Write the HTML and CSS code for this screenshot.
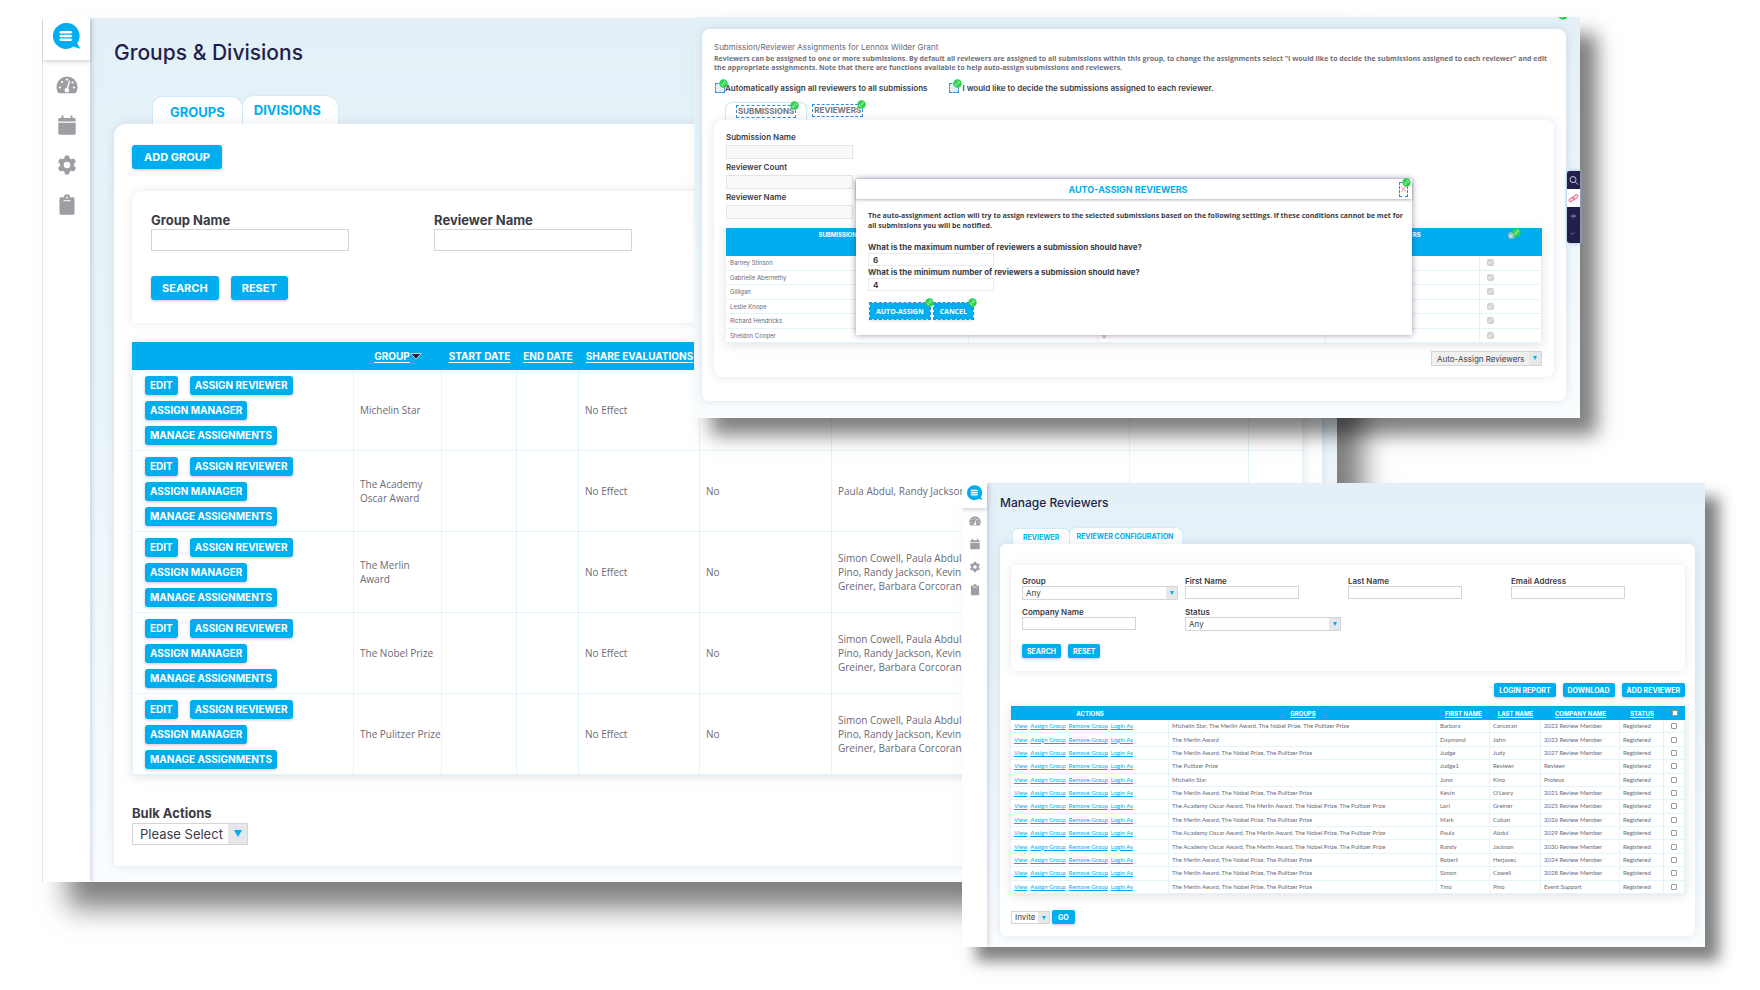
FILE: index.html
```html
<!DOCTYPE html>
<html lang="en">
<head>
<meta charset="utf-8">
<title>Groups &amp; Divisions</title>
<link rel="stylesheet" href="styles.css">
</head>
<body>
<svg class="sprite" aria-hidden="true">
  <symbol id="logo" viewBox="0 0 28 27">
    <path fill="#00aeef" d="M13 0a13 13 0 1 0 7.500 23.600c2.300 1 4.500 1.700 7.200 2.200-1.900-2-2.800-3.700-3.300-5.700A13 13 0 0 0 13 0z"/>
    <path fill="#fff" d="M7.500 8h10.500l1.500 1.300-1.500 1.200H7.500L6 9.300zM7.500 11.800h10.500l1.500 1.200-1.500 1.300H7.500L6 13zM7.500 15.500h10.500l1.500 1.300-1.500 1.200H7.500L6 16.800z"/>
  </symbol>
  <symbol id="gauge" viewBox="0 0 22 22">
    <path fill="#9d9da3" d="M11 2.500A10.500 10.500 0 0 0 .5 13c0 2 .5 3.800 1.400 5.400.3.500.7.800 1.200.8h15.800c.5 0 .9-.3 1.200-.8.900-1.600 1.400-3.400 1.400-5.400A10.500 10.500 0 0 0 11 2.500z"/>
    <g fill="#fff"><circle cx="11" cy="5.600" r="1.100"/><circle cx="6" cy="8" r="1.100"/><circle cx="4" cy="13.500" r="1.100"/><circle cx="18" cy="13.500" r="1.100"/><circle cx="16.500" cy="8.500" r="1.100"/><path d="M13 6.500l1.200.4-2 7.300a2.300 2.300 0 1 1-1.300-.4z"/></g>
  </symbol>
  <symbol id="calendar" viewBox="0 0 22 22">
    <path fill="#9d9da3" d="M5.500 1.500h2V4h7V1.500h2V4h1.700c.8 0 1.500.7 1.500 1.500v2H2.300v-2C2.300 4.700 3 4 3.800 4h1.700zM2.300 8.700h17.400v10.500c0 .8-.7 1.500-1.500 1.500H3.800c-.8 0-1.500-.7-1.500-1.500z"/>
  </symbol>
  <symbol id="cog" viewBox="0 0 22 22">
    <path fill="#9d9da3" fill-rule="evenodd" d="M9 1.500h4l.6 2.700 1.800 1 2.600-.8 2 3.500-2 1.900v2.300l2 1.900-2 3.500-2.600-.8-1.800 1-.6 2.800H9l-.6-2.800-1.800-1-2.600.8L2 14l2-1.900V9.800L2 7.900l2-3.500 2.600.8 1.800-1zM11 7.700a3.300 3.300 0 1 0 0 6.600 3.300 3.300 0 0 0 0-6.600z"/>
  </symbol>
  <symbol id="clipboard" viewBox="0 0 22 22">
    <path fill="#9d9da3" d="M5 3.200h3a3 3 0 0 1 6 0h3c.8 0 1.500.7 1.500 1.500v14.500c0 .8-.7 1.500-1.500 1.500H5c-.8 0-1.500-.7-1.500-1.500V4.700c0-.8.700-1.500 1.500-1.500z"/>
    <path fill="#fff" d="M7.500 6.200h7v1h-7z"/><circle cx="11" cy="3.500" r=".9" fill="#fff"/>
  </symbol>
  <symbol id="pin" viewBox="0 0 10 10">
    <circle cx="5" cy="5" r="4.700" fill="#2bd14b"/>
    <path fill="none" stroke="#d9f7dc" stroke-width=".8" d="M4.300 5.600l1.500-1.500M4.800 3.800l.7-.8a1 1 0 0 1 1.500 1.500l-.8.700M5.300 6.200l-.7.800a1 1 0 0 1-1.500-1.500l.7-.7"/>
  </symbol>
</svg>

<main class="desktop">
  <section class="window window-groups" aria-label="Groups and divisions">
    <nav class="rail" aria-label="Main">
      <a class="rail-logo" href="#" aria-label="Home"><svg><use href="#logo"/></svg></a>
      <a href="#" aria-label="Dashboard"><svg><use href="#gauge"/></svg></a>
      <a href="#" aria-label="Calendar"><svg><use href="#calendar"/></svg></a>
      <a href="#" aria-label="Settings"><svg><use href="#cog"/></svg></a>
      <a href="#" aria-label="Clipboard"><svg><use href="#clipboard"/></svg></a>
    </nav>
    <div class="content">
      <h1>Groups &amp; Divisions</h1>
      <div class="tabs"><a class="tab tab-on" href="#">GROUPS</a><a class="tab" href="#">DIVISIONS</a></div>
      <div class="panel">
        <button class="btn btn-add" type="button">ADD GROUP</button>
        <form class="card">
          <div class="fields">
            <label class="field">Group Name<input type="text"></label>
            <label class="field">Reviewer Name<input type="text"></label>
          </div>
          <div class="actions"><button class="btn" type="button">SEARCH</button><button class="btn" type="button">RESET</button></div>
        </form>
        <table class="grid">
          <colgroup><col class="g-act"><col class="g-group"><col class="g-start"><col class="g-end"><col class="g-share"><col class="g-no"><col class="g-rev"><col class="g-x"><col></colgroup>
          <thead><tr><th></th><th><a href="#">GROUP</a><svg class="sort" viewBox="0 0 12 7"><path fill="#231f4b" stroke="#d9c9cf" d="M.8.500h10.400L6 6.300z"/></svg></th><th><a href="#">START DATE</a></th><th><a href="#">END DATE</a></th><th><a href="#">SHARE EVALUATIONS</a></th><th></th><th></th><th></th><th></th></tr></thead>
          <tbody>
            <tr><td><div class="row-actions"><button class="chip" type="button">EDIT</button><button class="chip" type="button">ASSIGN REVIEWER</button><button class="chip" type="button">ASSIGN MANAGER</button><button class="chip" type="button">MANAGE ASSIGNMENTS</button></div></td><td>Michelin Star</td><td></td><td></td><td>No Effect</td><td></td><td></td><td></td><td></td></tr>
            <tr><td><div class="row-actions"><button class="chip" type="button">EDIT</button><button class="chip" type="button">ASSIGN REVIEWER</button><button class="chip" type="button">ASSIGN MANAGER</button><button class="chip" type="button">MANAGE ASSIGNMENTS</button></div></td><td>The Academy<br>Oscar Award</td><td></td><td></td><td>No Effect</td><td>No</td><td>Paula Abdul, Randy Jackson</td><td></td><td></td></tr>
            <tr><td><div class="row-actions"><button class="chip" type="button">EDIT</button><button class="chip" type="button">ASSIGN REVIEWER</button><button class="chip" type="button">ASSIGN MANAGER</button><button class="chip" type="button">MANAGE ASSIGNMENTS</button></div></td><td>The Merlin<br>Award</td><td></td><td></td><td>No Effect</td><td>No</td><td>Simon Cowell, Paula Abdul,<br>Pino, Randy Jackson, Kevin<br>Greiner, Barbara Corcoran,</td><td></td><td></td></tr>
            <tr><td><div class="row-actions"><button class="chip" type="button">EDIT</button><button class="chip" type="button">ASSIGN REVIEWER</button><button class="chip" type="button">ASSIGN MANAGER</button><button class="chip" type="button">MANAGE ASSIGNMENTS</button></div></td><td>The Nobel Prize</td><td></td><td></td><td>No Effect</td><td>No</td><td>Simon Cowell, Paula Abdul,<br>Pino, Randy Jackson, Kevin<br>Greiner, Barbara Corcoran</td><td></td><td></td></tr>
            <tr><td><div class="row-actions"><button class="chip" type="button">EDIT</button><button class="chip" type="button">ASSIGN REVIEWER</button><button class="chip" type="button">ASSIGN MANAGER</button><button class="chip" type="button">MANAGE ASSIGNMENTS</button></div></td><td>The Pulitzer Prize</td><td></td><td></td><td>No Effect</td><td>No</td><td>Simon Cowell, Paula Abdul,<br>Pino, Randy Jackson, Kevin<br>Greiner, Barbara Corcoran,</td><td></td><td></td></tr>
          </tbody>
        </table>
        <label class="field bulk">Bulk Actions<span class="select"><select><option>Please Select</option></select></span></label>
      </div>
    </div>
  </section>

  <section class="window window-assign" aria-label="Submission assignments">
    <div class="sheet">
      <h2>Submission/Reviewer Assignments for Lennox Wilder Grant</h2>
      <p class="note">Reviewers can be assigned to one or more submissions. By default all reviewers are assigned to all submissions within this group, to change the assignments select "I would like to decide the submissions assigned to each reviewer" and edit the appropriate assignments. Note that there are functions available to help auto-assign submissions and reviewers.</p>
      <div class="choices">
        <label class="choice"><span class="mark"><input type="radio" name="mode"><svg class="pin"><use href="#pin"/></svg></span>Automatically assign all reviewers to all submissions</label>
        <label class="choice choice-wide"><span class="mark"><input type="radio" name="mode"><svg class="pin"><use href="#pin"/></svg></span>I would like to decide the submissions assigned to each reviewer.</label>
      </div>
      <div class="tabs"><div class="tab tab-on"><a class="mark" href="#">SUBMISSIONS<svg class="pin"><use href="#pin"/></svg></a></div><div class="tab"><a class="mark" href="#">REVIEWERS<svg class="pin"><use href="#pin"/></svg></a></div></div>
      <div class="panel">
        <label class="field">Submission Name<input type="text" disabled></label>
        <label class="field">Reviewer Count<input type="text" disabled></label>
        <label class="field">Reviewer Name<input type="text" disabled></label>
        <table class="grid">
          <colgroup><col class="a-name"><col class="a-b"><col class="a-c"><col class="a-rev"><col class="a-chk"></colgroup>
          <thead><tr><th>SUBMISSION NAME</th><th></th><th></th><th>REVIEWERS</th><th><span class="head-check"><input type="checkbox" aria-label="Select all" checked disabled><svg class="pin"><use href="#pin"/></svg></span></th></tr></thead>
          <tbody>
            <tr><td>Barney Stinson</td><td></td><td></td><td></td><td><input type="checkbox" aria-label="Barney Stinson" checked disabled></td></tr>
            <tr><td>Gabrielle Abernethy</td><td></td><td></td><td></td><td><input type="checkbox" aria-label="Gabrielle Abernethy" checked disabled></td></tr>
            <tr><td>Gilligan</td><td></td><td></td><td></td><td><input type="checkbox" aria-label="Gilligan" checked disabled></td></tr>
            <tr><td>Leslie Knope</td><td></td><td></td><td></td><td><input type="checkbox" aria-label="Leslie Knope" checked disabled></td></tr>
            <tr><td>Richard Hendricks</td><td></td><td></td><td></td><td><input type="checkbox" aria-label="Richard Hendricks" checked disabled></td></tr>
            <tr><td>Sheldon Cooper</td><td></td><td>0</td><td></td><td><input type="checkbox" aria-label="Sheldon Cooper" checked disabled></td></tr>
          </tbody>
        </table>
        <div class="panel-foot"><span class="select select-grey"><select aria-label="Bulk action"><option>Auto-Assign Reviewers</option></select></span></div>
      </div>
    </div>
    <div class="corner-clip"><svg class="corner-pin"><use href="#pin"/></svg></div>
    <div class="tools">
      <button type="button" aria-label="Search"><svg viewBox="0 0 12 12"><circle cx="5.500" cy="5" r="3.300" fill="none" stroke="#dcd9e6"/><path stroke="#dcd9e6" d="M8 7.500l3 3"/></svg></button>
      <button class="tool-on" type="button" aria-label="Links"><svg viewBox="0 0 12 12"><g fill="none" stroke="#ee7d9b" stroke-width="1.400"><rect x="1" y="5.500" width="6" height="3" rx="1.500" transform="rotate(-40 4 7)"/><rect x="5" y="3" width="6" height="3" rx="1.500" transform="rotate(-40 8 4.500)"/></g></svg></button>
      <button type="button" aria-label="View"><svg viewBox="0 0 12 12"><path fill="none" stroke="#77739a" d="M3 5.500q3-3 6 0-3 3-6 0z"/><circle cx="6" cy="5.500" r="1" fill="#77739a"/></svg></button>
      <button type="button" aria-label="More"><svg viewBox="0 0 12 12"><path fill="none" stroke="#77739a" d="M3 4l1.500 2L7 3.500"/></svg></button>
    </div>
    <div class="modal" role="dialog" aria-label="Auto-assign reviewers">
      <header><h3>AUTO-ASSIGN REVIEWERS</h3><button class="mark close" type="button" aria-label="Close"><svg viewBox="0 0 8 10"><path stroke="#ee7d9b" d="M1.500 2l5 6M6.500 2l-5 6"/></svg><svg class="pin"><use href="#pin"/></svg></button></header>
      <div class="modal-body">
        <p>The auto-assignment action will try to assign reviewers to the selected submissions based on the following settings. If these conditions cannot be met for all submissions you will be notified.</p>
        <label class="field">What is the maximum number of reviewers a submission should have?<input type="text" value="6"></label>
        <label class="field">What is the minimum number of reviewers a submission should have?<input type="text" value="4"></label>
        <div class="actions"><button class="btn mark" type="button">AUTO-ASSIGN<svg class="pin"><use href="#pin"/></svg></button><button class="btn mark" type="button">CANCEL<svg class="pin"><use href="#pin"/></svg></button></div>
      </div>
    </div>
  </section>

  <section class="window window-reviewers" aria-label="Manage reviewers">
    <nav class="rail" aria-label="Reviewer area">
      <a class="rail-logo" href="#" aria-label="Home"><svg><use href="#logo"/></svg></a>
      <a href="#" aria-label="Dashboard"><svg><use href="#gauge"/></svg></a>
      <a href="#" aria-label="Calendar"><svg><use href="#calendar"/></svg></a>
      <a href="#" aria-label="Settings"><svg><use href="#cog"/></svg></a>
      <a href="#" aria-label="Clipboard"><svg><use href="#clipboard"/></svg></a>
    </nav>
    <div class="content">
      <h1>Manage Reviewers</h1>
      <div class="tabs"><a class="tab tab-on" href="#">REVIEWER</a><a class="tab" href="#">REVIEWER CONFIGURATION</a></div>
      <div class="panel">
        <form class="card">
          <div class="fields">
            <label class="field field-wide">Group<span class="select"><select><option>Any</option></select></span></label>
            <label class="field">First Name<input type="text"></label>
            <label class="field">Last Name<input type="text"></label>
            <label class="field">Email Address<input type="text"></label>
            <label class="field">Company Name<input type="text"></label>
            <label class="field field-wide">Status<span class="select"><select><option>Any</option></select></span></label>
          </div>
          <div class="actions"><button class="btn" type="button">SEARCH</button><button class="btn" type="button">RESET</button></div>
        </form>
        <div class="toolbar"><button class="btn" type="button">LOGIN REPORT</button><button class="btn" type="button">DOWNLOAD</button><button class="btn" type="button">ADD REVIEWER</button></div>
        <table class="grid">
          <colgroup><col class="r-act"><col><col class="r-first"><col class="r-last"><col class="r-comp"><col class="r-stat"><col class="r-chk"></colgroup>
          <thead><tr><th>ACTIONS</th><th><a href="#">GROUPS</a></th><th><a href="#">FIRST NAME</a></th><th><a href="#">LAST NAME</a></th><th><a href="#">COMPANY NAME</a></th><th><a href="#">STATUS</a></th><th><input type="checkbox" aria-label="Select all"></th></tr></thead>
          <tbody>
            <tr><td><a href="#">View</a><a href="#">Assign Group</a><a href="#">Remove Group</a><a href="#">Login As</a></td><td>Michelin Star, The Merlin Award, The Nobel Prize, The Pulitzer Prize</td><td>Barbara</td><td>Corcoran</td><td>2022 Review Member</td><td>Registered</td><td><input type="checkbox" aria-label="Barbara Corcoran"></td></tr>
            <tr><td><a href="#">View</a><a href="#">Assign Group</a><a href="#">Remove Group</a><a href="#">Login As</a></td><td>The Merlin Award</td><td>Daymond</td><td>John</td><td>2023 Review Member</td><td>Registered</td><td><input type="checkbox" aria-label="Daymond John"></td></tr>
            <tr><td><a href="#">View</a><a href="#">Assign Group</a><a href="#">Remove Group</a><a href="#">Login As</a></td><td>The Merlin Award, The Nobel Prize, The Pulitzer Prize</td><td>Judge</td><td>Judy</td><td>2027 Review Member</td><td>Registered</td><td><input type="checkbox" aria-label="Judge Judy"></td></tr>
            <tr><td><a href="#">View</a><a href="#">Assign Group</a><a href="#">Remove Group</a><a href="#">Login As</a></td><td>The Pulitzer Prize</td><td>Judge1</td><td>Reviewr</td><td>Reviewr</td><td>Registered</td><td><input type="checkbox" aria-label="Judge1 Reviewr"></td></tr>
            <tr><td><a href="#">View</a><a href="#">Assign Group</a><a href="#">Remove Group</a><a href="#">Login As</a></td><td>Michelin Star</td><td>Juno</td><td>Kino</td><td>Proteus</td><td>Registered</td><td><input type="checkbox" aria-label="Juno Kino"></td></tr>
            <tr><td><a href="#">View</a><a href="#">Assign Group</a><a href="#">Remove Group</a><a href="#">Login As</a></td><td>The Merlin Award, The Nobel Prize, The Pulitzer Prize</td><td>Kevin</td><td>O'Leary</td><td>2021 Review Member</td><td>Registered</td><td><input type="checkbox" aria-label="Kevin O'Leary"></td></tr>
            <tr><td><a href="#">View</a><a href="#">Assign Group</a><a href="#">Remove Group</a><a href="#">Login As</a></td><td>The Academy Oscar Award, The Merlin Award, The Nobel Prize, The Pulitzer Prize</td><td>Lori</td><td>Greiner</td><td>2025 Review Member</td><td>Registered</td><td><input type="checkbox" aria-label="Lori Greiner"></td></tr>
            <tr><td><a href="#">View</a><a href="#">Assign Group</a><a href="#">Remove Group</a><a href="#">Login As</a></td><td>The Merlin Award, The Nobel Prize, The Pulitzer Prize</td><td>Mark</td><td>Cuban</td><td>2026 Review Member</td><td>Registered</td><td><input type="checkbox" aria-label="Mark Cuban"></td></tr>
            <tr><td><a href="#">View</a><a href="#">Assign Group</a><a href="#">Remove Group</a><a href="#">Login As</a></td><td>The Academy Oscar Award, The Merlin Award, The Nobel Prize, The Pulitzer Prize</td><td>Paula</td><td>Abdul</td><td>2029 Review Member</td><td>Registered</td><td><input type="checkbox" aria-label="Paula Abdul"></td></tr>
            <tr><td><a href="#">View</a><a href="#">Assign Group</a><a href="#">Remove Group</a><a href="#">Login As</a></td><td>The Academy Oscar Award, The Merlin Award, The Nobel Prize, The Pulitzer Prize</td><td>Randy</td><td>Jackson</td><td>2030 Review Member</td><td>Registered</td><td><input type="checkbox" aria-label="Randy Jackson"></td></tr>
            <tr><td><a href="#">View</a><a href="#">Assign Group</a><a href="#">Remove Group</a><a href="#">Login As</a></td><td>The Merlin Award, The Nobel Prize, The Pulitzer Prize</td><td>Robert</td><td>Herjavec</td><td>2024 Review Member</td><td>Registered</td><td><input type="checkbox" aria-label="Robert Herjavec"></td></tr>
            <tr><td><a href="#">View</a><a href="#">Assign Group</a><a href="#">Remove Group</a><a href="#">Login As</a></td><td>The Merlin Award, The Nobel Prize, The Pulitzer Prize</td><td>Simon</td><td>Cowell</td><td>2028 Review Member</td><td>Registered</td><td><input type="checkbox" aria-label="Simon Cowell"></td></tr>
            <tr><td><a href="#">View</a><a href="#">Assign Group</a><a href="#">Remove Group</a><a href="#">Login As</a></td><td>The Merlin Award, The Nobel Prize, The Pulitzer Prize</td><td>Tino</td><td>Pino</td><td>Event Support</td><td>Registered</td><td><input type="checkbox" aria-label="Tino Pino"></td></tr>
          </tbody>
        </table>
        <div class="panel-foot"><span class="select"><select aria-label="Bulk action"><option>Invite</option></select></span><button class="btn" type="button">GO</button></div>
      </div>
    </div>
  </section>
</main>
</body>
</html>
```
FILE: styles.css
```css
* { box-sizing: border-box; }
body { margin: 0; background: #fff; color: #3c3c46; font-family: Inter, "Open Sans", sans-serif; }
h1, h2, h3, p { margin: 0; }
a { color: inherit; text-decoration: none; }
svg { display: block; }
button, input, select { font: inherit; margin: 0; }
.sprite { position: absolute; width: 0; height: 0; }
.desktop { position: relative; min-height: 100vh; overflow: hidden; }

/* Windows on the desktop */
.window { position: absolute; isolation: isolate; display: flex; background: linear-gradient(#e3f0f7, #e8f4f9 40%, #fafdfe); }
.window-groups { top: 18px; left: 42px; right: 423px; box-shadow: 26px 26px 26px rgba(0, 0, 0, .5); }
.window-assign { top: 17px; left: 694px; right: 180px; box-shadow: 17px 17px 18px rgba(0, 0, 0, .5); }
.window-reviewers { top: 483px; left: 962px; right: 55px; box-shadow: 14px 14px 14px rgba(0, 0, 0, .5); }

/* Icon rail */
.rail { display: flex; flex-direction: column; align-items: center; flex: none; background: #fff; box-shadow: 1px 0 6px rgba(60, 70, 120, .25); clip-path: inset(0 -8px 0 0); }
.rail-logo { display: flex; justify-content: center; width: 100%; box-shadow: 0 2px 4px rgba(60, 60, 80, .22); }
.content { flex: 1; min-width: 0; }
h1 { color: #231f4b; font-weight: 500; }

.tabs { display: flex; align-items: stretch; }
.tab { display: flex; align-items: center; background: #fff; color: #00aeef; font-weight: 700; box-shadow: 0 0 2px #b9deee; }
.tab-on { position: relative; z-index: 1; box-shadow: none; border: solid #cdeaf5; border-width: 1px 1px 0; }
.panel { position: relative; z-index: 1; background: #fff; box-shadow: 0 0 10px rgba(90, 100, 150, .16); }
.card { background: #fff; box-shadow: 0 0 10px rgba(90, 90, 120, .14); }
.fields, .actions, .toolbar, .panel-foot { display: flex; }

.field { display: block; font-weight: 700; white-space: nowrap; }
.field input { display: block; border: 1px solid #d5d5d8; background: #fff; border-radius: 0; outline: 0; }
.field input:disabled { background: #fafafa; border-color: #e4e4e6; }
.select { position: relative; display: block; font-weight: 400; }
.select select { display: block; width: 100%; height: 100%; padding: 0; border: 1px solid #d5d5d8; border-radius: 0; appearance: none; background: #fff; color: #3c3c46; outline: 0; }
.select::before { content: ""; position: absolute; top: 1px; bottom: 1px; right: 1px; background: #e6e7eb; pointer-events: none; }
.select::after { content: ""; position: absolute; border: solid transparent; border-top-color: #00aeef; border-bottom: 0; pointer-events: none; }
.select-grey select { background: #f0f0f0; }

.btn, .chip { display: block; padding: 0; border: 0; background: #00aeef; color: #fff; font-weight: 700; white-space: nowrap; box-shadow: 0 1px 3px rgba(60, 60, 90, .3); }

.grid { width: 100%; border-collapse: separate; border-spacing: 0; table-layout: fixed; background: #fff; box-shadow: 0 2px 10px rgba(90, 90, 120, .18); }
.grid th { padding: 0; background: #00aeef; color: #fff; font-weight: 700; white-space: nowrap; }
.grid th a { text-decoration: underline; text-underline-offset: 2px; }
.grid td { border: solid #e4f4fb; border-width: 0 1px 1px 0; color: #6a6a76; white-space: nowrap; }
.grid input { display: block; width: 7px; height: 7px; }

/* Groups window */
.window-groups .rail { width: 48px; border-left: 1px solid #dfe4ee; }
.window-groups .rail a { margin-bottom: 18px; }
.window-groups .rail .rail-logo { height: 42px; padding-top: 5px; margin-bottom: 14px; }
.window-groups .rail svg { width: 22px; height: 22px; }
.window-groups .rail .rail-logo svg { width: 28px; height: 27px; }
.window-groups .content { padding: 20px 15px 16px 24px; }
.window-groups h1 { font-size: 21px; line-height: 30px; }
.window-groups .tabs { height: 28px; margin-top: 28px; padding-left: 38px; font-size: 13px; }
.window-groups .tab { padding: 0 17px 0 11px; border-radius: 10px 12px 0 0; }
.window-groups .tab-on { padding: 2px 17px 0; }
.window-groups .panel { padding: 21px 19px 21px 18px; border-radius: 12px 12px 0 0; }
.window-groups .btn { height: 24px; padding: 0 11px; border-radius: 3px; font-size: 11px; }
.window-groups .btn-add { padding: 0 12px; }
.window-groups .card { margin-top: 22px; padding: 20px 19px 23px; border-radius: 12px 12px 0 0; }
.window-groups .fields { gap: 85px; }
.window-groups .field { font-size: 13px; line-height: 18px; }
.window-groups .field input { width: 198px; height: 22px; }
.window-groups .actions { gap: 12px; margin-top: 25px; }
.window-groups .grid { margin-top: 19px; font-size: 10px; }
.window-groups th { height: 28px; }
.window-groups td { height: 81px; padding: 0 0 0 6px; font-family: "Open Sans", sans-serif; line-height: 14px; }
.window-groups td:first-child { padding: 0 12px; border-left: 1px solid #e4f4fb; }
.sort { display: inline-block; width: 12px; height: 7px; }
.g-act { width: 222px; } .g-group { width: 88px; } .g-start { width: 75px; } .g-end { width: 62px; } .g-share { width: 121px; }
.g-no { width: 132px; } .g-rev { width: 298px; } .g-x { width: 119px; }
.row-actions { display: flex; flex-wrap: wrap; gap: 6px 12px; font-family: Inter, sans-serif; }
.chip { height: 19px; padding: 0 5px; border-radius: 3px; font-size: 10px; }
.window-groups .bulk { margin-top: 29px; }
.bulk .select { width: 116px; height: 22px; margin-top: 1px; font-size: 13px; }
.bulk .select select { padding-left: 7px; }
.bulk .select::before { width: 19px; }
.bulk .select::after { border-width: 7px 4px 0; right: 6px; top: 7px; }

/* Assignment window */
.window-assign { padding: 12px 14px 17px 8px; font-size: 8px; }
.sheet { flex: 1; min-width: 0; padding: 11px 12px 24px; border-radius: 8px; background: #fff; box-shadow: 0 0 8px rgba(90, 100, 150, .18); }
.window-assign h2 { font-size: 8px; line-height: 14px; font-weight: 400; color: #6a6a76; }
.note { font-family: "Open Sans", sans-serif; font-size: 7px; line-height: 9px; font-weight: 700; color: #70707a; }
.choices { display: flex; align-items: center; gap: 22px; height: 18px; margin-top: 7px; padding-left: 2px; font-weight: 600; line-height: 10px; }
.choice { display: flex; align-items: center; gap: 1px; }
.choice-wide { gap: 5px; }
.mark { position: relative; display: block; outline: 1px dashed #2a8fe0; }
.mark input { display: block; width: 8px; height: 8px; appearance: none; background: #e6eef6; }
.pin { position: absolute; z-index: 2; width: 9px; height: 9px; top: -5px; right: -4px; }
.window-assign .tabs { height: 18px; margin-top: 5px; padding-left: 11px; }
.window-assign .tab { color: #77777f; padding: 0 9px 2px 6px; border-radius: 7px 7px 0 0; font-size: 8px; box-shadow: 0 0 1px #b9deee; }
.window-assign .tab-on { padding: 0 11px; }
.window-assign .tab .mark { padding: 0 1px; line-height: 11px; }
.window-assign .panel { padding: 11px 12px; border-radius: 8px; }
.window-assign .field { font-weight: 600; line-height: 12px; }
.window-assign .panel .field { margin-bottom: 2px; font-size: 8px; }
.window-assign .panel .field input { width: 127px; height: 14px; margin-top: 2px; }
.window-assign .grid { height: 115px; margin-top: 9px; font-size: 6px; }
.window-assign th { height: 28px; padding-top: 3px; vertical-align: top; font-size: 6px; line-height: 8px; }
.window-assign td { height: 14px; padding: 0 4px; }
.window-assign td:last-child { padding-left: 7px; }
.head-check { position: relative; display: inline-block; padding: 1px; }
.window-assign .head-check .pin { top: -3px; right: -5px; }
.a-name { width: 243px; } .a-b { width: 129px; } .a-rev { width: 154px; } .a-chk { width: 62px; }
.window-assign .panel-foot { justify-content: flex-end; margin-top: 8px; }
.select-grey { width: 111px; height: 15px; font-size: 8px; }
.select-grey select { padding-left: 5px; }
.select-grey::before { width: 12px; }
.select-grey::after { border-width: 4px 2px 0; right: 5px; top: 5px; }
.corner-clip { position: absolute; top: 0; right: 12px; width: 10px; height: 3px; overflow: hidden; }
.corner-pin { width: 10px; height: 10px; margin-top: -7px; }
.tools { position: absolute; top: 154px; right: 0; width: 13px; border-radius: 3px 0 0 3px; background: #231f4b; box-shadow: 0 0 4px #9db9e8; }
.tools button { display: block; width: 13px; height: 18px; padding: 0; border: 0; background: none; }
.tools .tool-on { background: #fff; }
.tools svg { width: 11px; height: 11px; margin: 0 auto; }

.modal { position: absolute; z-index: 3; top: 162px; left: 162px; right: 168px; background: #fff; box-shadow: 0 0 6px rgba(40, 40, 80, .5); }
.modal header { display: flex; align-items: center; height: 20px; padding-right: 5px; box-shadow: 0 1px 3px rgba(40, 40, 80, .35); }
.modal h3 { flex: 1; text-align: center; color: #00aeef; font-size: 9px; font-weight: 700; }
.close { width: 7px; height: 13px; padding: 0; border: 0; background: none; }
.close svg:first-child { width: 7px; height: 10px; }
.modal-body { padding: 12px 4px 16px 12px; }
.modal-body p { margin-bottom: 10px; font-family: "Open Sans", sans-serif; font-size: 7px; line-height: 10px; font-weight: 700; }
.modal-body .field { font-size: 8px; line-height: 12px; font-weight: 700; }
.modal-body .field input { width: 126px; height: 13px; padding: 0 4px; border-color: #ececef; font-size: 8px; color: #3c3c46; }
.modal-body .actions { gap: 4px; margin: 12px 0 0 2px; }
.modal-body .btn { height: 16px; padding: 0 6px; font-family: "Open Sans", sans-serif; font-size: 7px; }

/* Reviewers window */
.window-reviewers .rail { width: 25px; }
.window-reviewers .rail a { margin-bottom: 11px; }
.window-reviewers .rail .rail-logo { height: 25px; padding-top: 2px; margin-bottom: 7px; }
.window-reviewers .rail svg { width: 12px; height: 12px; }
.window-reviewers .rail .rail-logo svg { width: 16px; height: 16px; }
.window-reviewers .content { padding: 11px 10px 11px 13px; }
.window-reviewers h1 { font-size: 12px; line-height: 18px; }
.window-reviewers .tabs { height: 16px; margin-top: 16px; padding-left: 12px; font-size: 7px; }
.window-reviewers .tab { padding: 0 9px 0 6px; border-radius: 6px 6px 0 0; }
.window-reviewers .tab-on { padding: 1px 10px 0; }
.window-reviewers .panel { padding: 21px 10px 12px 11px; border-radius: 6px; }
.window-reviewers .card { padding: 11px 11px 13px; border-radius: 6px; }
.window-reviewers .fields { display: grid; grid-template-columns: repeat(4, 1fr); row-gap: 7px; }
.window-reviewers .field { font-size: 8px; line-height: 10px; font-weight: 600; }
.window-reviewers .field input { width: 114px; height: 13px; }
.window-reviewers .field .select { width: 156px; height: 14px; }
.window-reviewers .select select { padding-left: 3px; font-size: 8px; }
.window-reviewers .select::before { width: 11px; }
.window-reviewers .select::after { border-width: 4px 2px 0; right: 4px; top: 5px; }
.window-reviewers .btn { height: 14px; padding: 0 5px; border-radius: 2px; font-size: 7px; }
.window-reviewers .actions { gap: 7px; margin-top: 13px; }
.window-reviewers .toolbar { justify-content: flex-end; gap: 7px; margin-top: 12px; }
.window-reviewers .grid { height: 188px; margin-top: 9px; font-size: 6px; }
.window-reviewers th { height: 14px; font-size: 6px; }
.window-reviewers th a { text-underline-offset: 1px; }
.window-reviewers td { height: 13px; padding: 0 3px; font-family: Lato, sans-serif; line-height: 8px; }
.window-reviewers td a { margin-right: 3px; color: #00aeef; text-decoration: underline; }
.window-reviewers .grid input { width: 6px; height: 6px; margin: 0 auto; appearance: none; border: 1px solid #9a9aa0; border-radius: 1px; background: #fff; }
.window-reviewers th input { border-color: #fff; }
.r-act { width: 158px; } .r-first { width: 53px; } .r-last { width: 51px; } .r-comp { width: 79px; } .r-stat { width: 44px; } .r-chk { width: 21px; }
.window-reviewers .panel-foot { align-items: center; gap: 2px; margin-top: 16px; }
.window-reviewers .panel-foot .select { width: 39px; height: 13px; }
.window-reviewers .panel-foot .btn { padding: 0 6px; }
```
